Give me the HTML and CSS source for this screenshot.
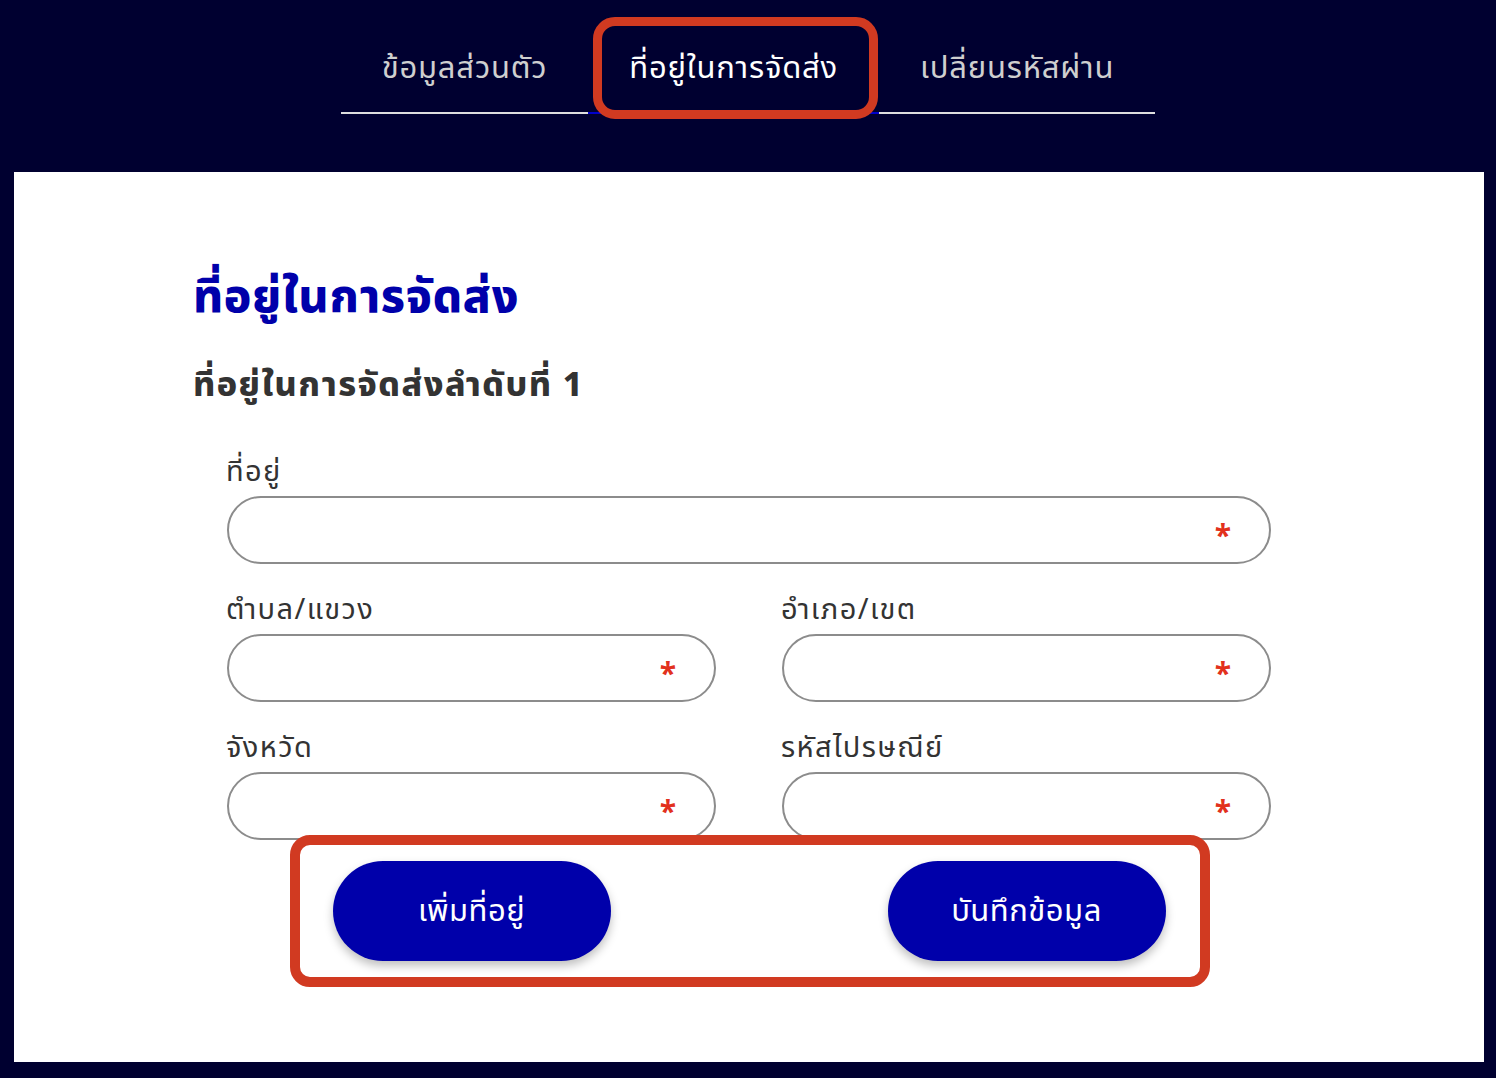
FILE: index.html
```html
<!DOCTYPE html>
<html lang="th">
<head>
    <meta charset="UTF-8">
    <meta name="viewport" content="width=device-width, initial-scale=1.0">
    <title>ที่อยู่ในการจัดส่ง</title>
    <link rel="stylesheet" href="styles.css">
</head>
<body>
    <header class="top">
        <nav class="tabs">
            <a class="tab" href="#">ข้อมูลส่วนตัว</a>
            <a class="tab active" href="#">ที่อยู่ในการจัดส่ง<span class="mark mark-tab"></span></a>
            <a class="tab" href="#">เปลี่ยนรหัสผ่าน</a>
        </nav>
    </header>

    <main class="card">
        <div class="content">
            <h1 class="title">ที่อยู่ในการจัดส่ง</h1>
            <h2 class="subtitle">ที่อยู่ในการจัดส่งลำดับที่ 1</h2>

            <form class="address-form">
                <div class="field full">
                    <label for="address">ที่อยู่</label>
                    <div class="input-wrap">
                        <input type="text" id="address">
                        <span class="req">*</span>
                    </div>
                </div>
                <div class="field">
                    <label for="subdistrict">ตำบล/แขวง</label>
                    <div class="input-wrap">
                        <input type="text" id="subdistrict">
                        <span class="req">*</span>
                    </div>
                </div>
                <div class="field">
                    <label for="district">อำเภอ/เขต</label>
                    <div class="input-wrap">
                        <input type="text" id="district">
                        <span class="req">*</span>
                    </div>
                </div>
                <div class="field">
                    <label for="province">จังหวัด</label>
                    <div class="input-wrap">
                        <input type="text" id="province">
                        <span class="req">*</span>
                    </div>
                </div>
                <div class="field">
                    <label for="zipcode">รหัสไปรษณีย์</label>
                    <div class="input-wrap">
                        <input type="text" id="zipcode">
                        <span class="req">*</span>
                    </div>
                </div>

                <div class="actions">
                    <button type="button" class="btn">เพิ่มที่อยู่</button>
                    <button type="submit" class="btn">บันทึกข้อมูล</button>
                    <span class="mark mark-actions"></span>
                </div>
            </form>
        </div>
    </main>
</body>
</html>
```

FILE: styles.css
```css
body {
    margin: 0;
    background-color: #000030;
    font-family: "Noto Sans Thai", "Noto Sans", "DejaVu Sans", sans-serif;
    color: #333;
    padding-bottom: 16px;
}

.top {
    height: 172px;
    display: flex;
    justify-content: center;
}

.tabs {
    display: flex;
    align-items: flex-start;
}

.tab {
    position: relative;
    display: block;
    padding: 49px 41px 23px;
    font-size: 31px;
    line-height: 40px;
    letter-spacing: 0.8px;
    color: #cfcfcf;
    text-decoration: none;
    border-bottom: 2px solid #dedede;
}

.tab.active {
    color: #ffffff;
    border-bottom-color: #0000cc;
}

/* กรอบไฮไลต์สีแดง */
.mark {
    position: absolute;
    border: 9px solid #d13a21;
    border-radius: 22px;
    pointer-events: none;
}

.mark-tab {
    top: 17px;
    bottom: -7px;
    left: 5px;
    right: 1px;
}

.card {
    display: block;
    background-color: #ffffff;
    margin: 0 12px 0 14px;
    height: 890px;
    box-sizing: border-box;
    padding-top: 98px;
}

.content {
    max-width: 1112px;
    margin: 0 auto;
}

.title {
    margin: 0;
    color: #0000aa;
    font-size: 46px;
    line-height: 56px;
    letter-spacing: 0.8px;
    font-weight: 800;
}

.subtitle {
    margin: 38px 0 0;
    color: #333;
    font-size: 34px;
    line-height: 44px;
    letter-spacing: 1.5px;
    font-weight: 800;
}

.address-form {
    margin: 46px 34px 0;
    display: grid;
    grid-template-columns: 1fr 1fr;
    column-gap: 66px;
    row-gap: 28px;
}

.field.full {
    grid-column: 1 / 3;
}

.field label {
    display: block;
    font-size: 29px;
    line-height: 36px;
    letter-spacing: 1.4px;
    margin-bottom: 6px;
    margin-left: -1px;
    color: #333;
}

.input-wrap {
    position: relative;
}

.input-wrap input {
    display: block;
    width: 100%;
    box-sizing: border-box;
    height: 68px;
    border: 2px solid #8c8c8c;
    border-radius: 34px;
    padding: 0 80px 0 28px;
    font-size: 24px;
    font-family: inherit;
    background: #fff;
    outline: none;
}

.req {
    position: absolute;
    right: 40px;
    top: 50%;
    transform: translateY(-28%);
    color: #e2311d;
    font-size: 30px;
    font-weight: bold;
    line-height: 1;
}

.actions {
    position: relative;
    grid-column: 1 / 3;
    display: grid;
    grid-template-columns: 1fr 1fr;
    column-gap: 66px;
    justify-items: center;
    margin-top: -7px;
}

.btn {
    width: 278px;
    height: 100px;
    border: none;
    border-radius: 50px;
    background-color: #0000aa;
    color: #ffffff;
    font-size: 31px;
    letter-spacing: 0.5px;
    font-family: inherit;
    box-shadow: 0 5px 10px rgba(0, 0, 0, 0.25);
    cursor: pointer;
}

.mark-actions {
    top: -26px;
    bottom: -26px;
    left: 63px;
    right: 61px;
    border-width: 10px;
    border-radius: 20px;
}
```
